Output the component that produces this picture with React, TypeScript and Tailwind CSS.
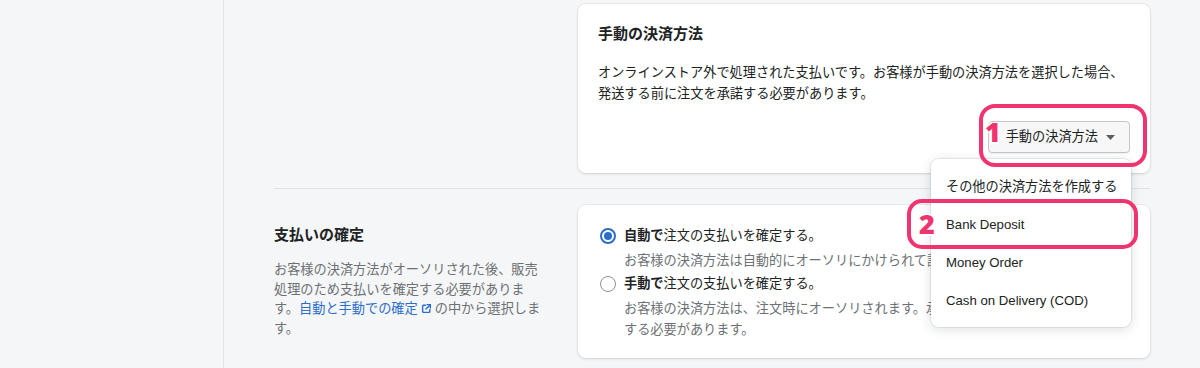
import React from "react";

function ExternalIcon() {
  return (
    <svg width="11" height="11" viewBox="0 0 20 20" className="inline-block align-[-1px] mx-[3px]" fill="none">
      <path d="M11 3h6v6" stroke="#2c6ecb" strokeWidth="2.6" strokeLinecap="round" strokeLinejoin="round" />
      <path d="M17 3l-8 8" stroke="#2c6ecb" strokeWidth="2.6" strokeLinecap="round" />
      <path d="M8 4H4.5A1.5 1.5 0 0 0 3 5.5v10A1.5 1.5 0 0 0 4.5 17h10a1.5 1.5 0 0 0 1.5-1.5V12" stroke="#2c6ecb" strokeWidth="2.6" strokeLinecap="round" />
    </svg>
  );
}

function Radio({ checked }: { checked: boolean }) {
  return checked ? (
    <span className="w-4 h-4 rounded-full border-[2px] border-[#2c6ecb] bg-white flex items-center justify-center shrink-0">
      <span className="w-[8px] h-[8px] rounded-full bg-[#2c6ecb]" />
    </span>
  ) : (
    <span className="w-4 h-4 rounded-full border-[1.5px] border-[#8c9196] bg-white shrink-0" />
  );
}

const outline = {
  textShadow:
    "0 0 2px #fff, 1.5px 1.5px 0 #fff, -1.5px -1.5px 0 #fff, 1.5px -1.5px 0 #fff, -1.5px 1.5px 0 #fff",
};

export default function App() {
  return (
    <div className="w-[1200px] h-[368px] overflow-hidden bg-[#f5f6f7] flex relative text-[#202223] font-['Liberation_Sans','Noto_Sans_CJK_JP',sans-serif]">
      {/* sidebar edge */}
      <div className="w-[224px] shrink-0 border-r-[1.5px] border-[#e3e4e6]" />

      <div className="pl-[50px] w-[926px]">
        {/* Section 1 */}
        <div className="flex pt-[4px]">
          <div className="w-[304px] shrink-0" />
          <div className="w-[572px] bg-white rounded-[8px] shadow-[0_0_0_1px_rgba(63,63,68,0.05),0_1px_3px_rgba(63,63,68,0.15)] px-[20px] pt-[20px] pb-[20px]">
            <div className="text-[15px] leading-[20px] font-bold">手動の決済方法</div>
            <div className="mt-[18px] text-[13.2px] leading-[21px] whitespace-nowrap">
              オンラインストア外で処理された支払いです。お客様が手動の決済方法を選択した場合、
              <br />
              発送する前に注文を承諾する必要があります。
            </div>
            <div className="flex justify-end mt-[17px]">
              <button className="h-[32px] pl-[17px] pr-[14px] flex items-center gap-[8px] rounded-[4px] border border-[#c4c7ca] bg-[#f7f7f8] shadow-[0_1px_0_rgba(0,0,0,0.05)] text-[13.2px] text-[#202223]">
                <span>手動の決済方法</span>
                <svg width="9" height="5" viewBox="0 0 9 5">
                  <path d="M0 0h9L4.5 5z" fill="#5c5f62" />
                </svg>
              </button>
            </div>
          </div>
        </div>

        <div className="mt-[15px] h-px bg-[#e1e3e5] w-[876px]" />

        {/* Section 2 */}
        <div className="flex mt-[16px]">
          <div className="w-[304px] shrink-0 pt-[20px]">
            <div className="text-[15px] leading-[20px] font-bold">支払いの確定</div>
            <div className="mt-[15px] text-[13.2px] leading-[19.7px] text-[#6d7175] whitespace-nowrap">
              お客様の決済方法がオーソリされた後、販売
              <br />
              処理のため支払いを確定する必要がありま
              <br />
              す。<span className="text-[#2c6ecb]">自動と手動での確定<ExternalIcon /></span>の中から選択しま
              <br />
              す。
            </div>
          </div>
          <div className="w-[572px] bg-white rounded-[8px] shadow-[0_0_0_1px_rgba(63,63,68,0.05),0_1px_3px_rgba(63,63,68,0.15)] pl-[22px] pr-[20px] pt-[21px] pb-[18px] overflow-hidden">
            <div className="flex items-center gap-[8px] h-[20px]">
              <Radio checked />
              <span className="text-[13.2px] leading-[20px] whitespace-nowrap">
                <span className="font-bold">自動で</span>注文の支払いを確定する。
              </span>
            </div>
            <div className="ml-[24px] w-[307px] overflow-hidden mt-[3.5px] text-[13.2px] leading-[21px] text-[#6d7175] whitespace-nowrap">
              お客様の決済方法は自動的にオーソリにかけられて請求されます。
            </div>
            <div className="flex items-center gap-[8px] h-[20px] mt-[3.5px]">
              <Radio checked={false} />
              <span className="text-[13.2px] leading-[20px] whitespace-nowrap">
                <span className="font-bold">手動で</span>注文の支払いを確定する。
              </span>
            </div>
            <div className="ml-[24px] w-[307px] overflow-hidden mt-[3.5px] text-[13.2px] leading-[21px] text-[#6d7175] whitespace-nowrap">
              お客様の決済方法は、注文時にオーソリされます。承認後に支払いを手動で確定
              <br />
              する必要があります。
            </div>
          </div>
        </div>
      </div>

      {/* Dropdown menu */}
      <div className="absolute left-[931px] top-[159px] w-[200px] bg-white rounded-[8px] shadow-[0_0_0_1px_rgba(6,44,82,0.08),0_2px_12px_rgba(33,43,54,0.16)] pt-[9px] pb-[7px] text-[13.2px] text-[#202223]">
        <div className="h-[38px] pl-[15px] flex items-center whitespace-nowrap">その他の決済方法を作成する</div>
        <div className="h-[38px] pl-[15px] flex items-center">Bank Deposit</div>
        <div className="h-[38px] pl-[15px] flex items-center">Money Order</div>
        <div className="h-[38px] pl-[15px] flex items-center">Cash on Delivery (COD)</div>
      </div>

      {/* Callout 1 */}
      <div className="absolute left-[979px] top-[104px] w-[168px] h-[63px] rounded-[16px] border-[4px] border-[#f0346f]" />
      <div
        className="absolute left-[985px] top-[115px] text-[27px] leading-[34px] font-black text-[#f0346f] font-['Noto_Sans',sans-serif]"
        style={outline}
      >
        1
      </div>

      {/* Callout 2 */}
      <div className="absolute left-[907px] top-[199px] w-[231px] h-[50px] rounded-[15px] border-[4px] border-[#f0346f]" />
      <div
        className="absolute left-[919px] top-[207px] text-[27px] leading-[34px] font-black text-[#f0346f] font-['Noto_Sans',sans-serif]"
        style={outline}
      >
        2
      </div>
    </div>
  );
}
